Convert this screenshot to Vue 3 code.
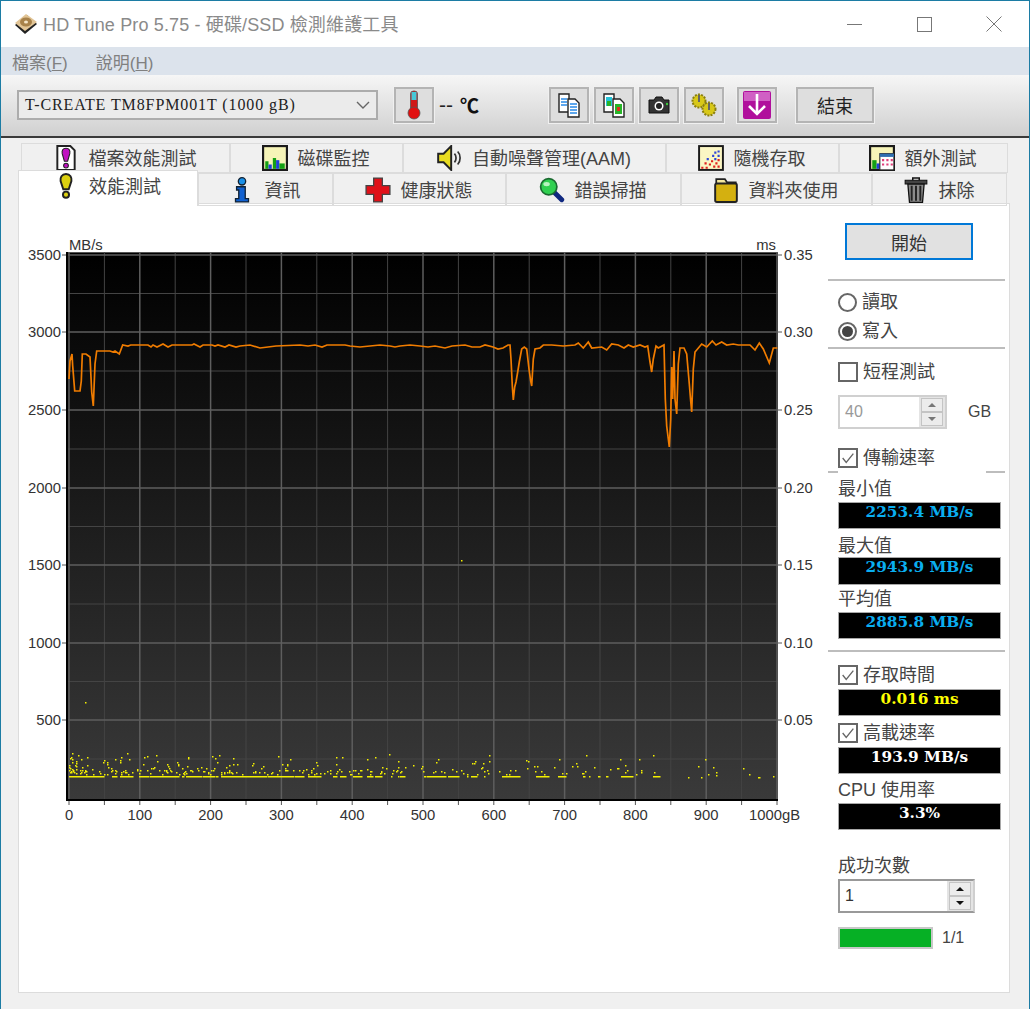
<template>
  <div class="window">
    <div class="titlebar">
      <svg class="app-icon" viewBox="0 0 24 22" width="24" height="22">
        <polygon points="1,12 13,2 23,11 11,21" fill="#222" />
        <polygon points="1,10 12,1 23,9 11,18" fill="#e2c596" />
        <ellipse cx="12" cy="9" rx="6" ry="4.500" fill="#a8824a" />
        <ellipse cx="12" cy="9" rx="2" ry="1.500" fill="#f5e6c8" />
      </svg>
      <span class="app-title">HD Tune Pro 5.75 - 硬碟/SSD 檢測維護工具</span>
      <div class="win-btns">
        <div class="win-btn"><span class="win-min"></span></div>
        <div class="win-btn"><span class="win-max"></span></div>
        <div class="win-btn">
          <svg viewBox="0 0 16 16" width="16" height="16"><path d="M0.500 0.500L15.500 15.500M15.500 0.500L0.500 15.500" stroke="#777" stroke-width="1" fill="none" /></svg>
        </div>
      </div>
    </div>

    <div class="menubar">
      <span class="menu-item">檔案(<u>F</u>)</span>
      <span class="menu-item">說明(<u>H</u>)</span>
    </div>

    <div class="toolbar">
      <div class="combo">
        <span class="combo-text">T-CREATE TM8FPM001T (1000 gB)</span>
        <svg viewBox="0 0 14 8" width="14" height="8"><path d="M1 1L7 7L13 1" stroke="#666" stroke-width="1.400" fill="none" /></svg>
      </div>
      <button type="button" class="tool-btn temp-btn">
        <svg viewBox="0 0 24 30" width="24" height="30">
          <rect x="8.500" y="1" width="7" height="20" rx="3" fill="#d01818" stroke="#555" stroke-width="0.800" />
          <rect x="9.500" y="2" width="5" height="8" fill="#46c8d8" />
          <circle cx="12" cy="23" r="6" fill="#e01010" stroke="#555" stroke-width="0.800" />
        </svg>
      </button>
      <span class="temp-val">--</span>
      <span class="temp-unit">℃</span>

      <button type="button" class="tool-btn first-tool">
        <svg viewBox="0 0 26 26" width="26" height="26">
          <path d="M3 2h10v18H3z" fill="#fff" stroke="#222" stroke-width="1.400" />
          <path d="M5 7h6M5 10h6M5 13h6" stroke="#2a8ae8" stroke-width="1.500" />
          <path d="M12 7h7l4 4v14H12z" fill="#fff" stroke="#222" stroke-width="1.400" />
          <path d="M14 12h7M14 15h7M14 18h7M14 21h7" stroke="#2a8ae8" stroke-width="1.500" />
        </svg>
      </button>
      <button type="button" class="tool-btn">
        <svg viewBox="0 0 26 26" width="26" height="26">
          <path d="M3 2h10v18H3z" fill="#fff" stroke="#222" stroke-width="1.400" />
          <rect x="5" y="5" width="6" height="9" fill="#25c4d8" />
          <rect x="6" y="9" width="4" height="5" fill="#28b428" />
          <path d="M12 7h7l4 4v14H12z" fill="#fff" stroke="#222" stroke-width="1.400" />
          <rect x="14" y="12" width="7" height="10" fill="#28b428" />
          <rect x="16" y="15" width="3" height="4" fill="#e03020" />
        </svg>
      </button>
      <button type="button" class="tool-btn">
        <svg viewBox="0 0 26 22" width="26" height="22">
          <path d="M3 6h5l2-3h6l2 3h5v13H3z" fill="#333" stroke="#111" stroke-width="1" />
          <circle cx="13" cy="12" r="4.500" fill="#fff" />
          <circle cx="13" cy="12" r="3" fill="#222" />
          <circle cx="21" cy="10" r="1.200" fill="#3cc83c" />
        </svg>
      </button>
      <button type="button" class="tool-btn">
        <svg viewBox="0 0 26 26" width="26" height="26">
          <circle cx="8" cy="9" r="6.500" fill="#d8c818" stroke="#8a7e10" stroke-width="2" stroke-dasharray="2 1.200" />
          <circle cx="18" cy="17" r="6.500" fill="#d8c818" stroke="#8a7e10" stroke-width="2" stroke-dasharray="2 1.200" />
          <path d="M8 3v7M18 11v7" stroke="#666" stroke-width="2" />
        </svg>
      </button>
      <button type="button" class="tool-btn save-btn">
        <svg viewBox="0 0 30 30" width="30" height="30">
          <rect x="1" y="1" width="28" height="28" rx="2" fill="#b0109c" />
          <rect x="2" y="2" width="26" height="9" fill="#d060c4" />
          <path d="M15 4v20M7 16l8 8l8-8" stroke="#fff" stroke-width="2.600" fill="none" />
        </svg>
      </button>
      <button type="button" class="tool-btn exit-btn">結束</button>
    </div>

    <div class="tabs-area">
      <div v-for="row in tabRows" :key="row.name" class="tab-row" :class="row.name">
        <div v-for="tab in row.tabs" :key="tab.label" class="tab" :class="{ active: tab.active }">
          <svg class="tab-icon" viewBox="0 0 24 24" width="26" height="26">
            <template v-if="tab.icon === 'fileperf'">
              <path d="M4 1h12l4 4v18H4z" fill="#fff" stroke="#222" stroke-width="1.800" />
              <path d="M12 3c3 0 4 2 3.500 5l-2 7h-3l-2-7C8 5 9 3 12 3z" fill="#c010c0" stroke="#222" />
              <circle cx="12" cy="19" r="2.200" fill="#c010c0" stroke="#222" />
            </template>
            <template v-else-if="tab.icon === 'monitor'">
              <rect x="1" y="1" width="22" height="22" fill="#f6f4b8" stroke="#1a1a1a" stroke-width="2" />
              <path d="M3 15h3v7H3z" fill="#14a014" />
              <path d="M6 18h3v4H6z" fill="#2040d8" />
              <path d="M10 12h3v10h-3z" fill="#14a014" />
              <path d="M13 14h3v8h-3z" fill="#2040d8" />
              <path d="M16 17h5v5h-5z" fill="#14a014" />
            </template>
            <template v-else-if="tab.icon === 'speaker'">
              <path d="M2 8h5l7-7v22l-7-7H2z" fill="#e8dc20" stroke="#222" stroke-width="1.800" />
              <path d="M17 8c2 2 2 6 0 8M20 6c3 3 3 9 0 12" stroke="#333" stroke-width="1.600" fill="none" />
            </template>
            <template v-else-if="tab.icon === 'random'">
              <rect x="1" y="1" width="22" height="22" fill="#fbf6c4" stroke="#1a1a1a" stroke-width="1.800" />
              <path d="M3 20h2v2H3zM6 16h2v2H6zM7 20h2v2H7zM10 17h2v2h-2zM12 14h2v2h-2zM14 19h2v2h-2zM16 16h2v2h-2zM18 19h2v2h-2zM18 13h2v2h-2z" fill="#e02020" />
              <path d="M8 12h2v2H8zM13 9h2v2h-2zM15 12h2v2h-2zM18 5h2v2h-2zM18 9h2v2h-2zM15 6h2v2h-2z" fill="#3048d8" />
            </template>
            <template v-else-if="tab.icon === 'extra'">
              <rect x="1" y="1" width="22" height="22" fill="#f6f4b8" stroke="#1a1a1a" stroke-width="2" />
              <path d="M3 14h4v8H3z" fill="#14a014" />
              <path d="M7 17h3v5H7z" fill="#2040d8" />
              <rect x="10" y="8" width="13" height="15" fill="#fff" stroke="#222" />
              <rect x="10" y="8" width="13" height="3" fill="#2f6fb0" />
              <path d="M12 13h2v2h-2zM16 13h2v2h-2zM20 13h2v2h-2zM12 17h2v2h-2zM16 17h2v2h-2zM20 17h2v2h-2z" fill="#e0407a" />
            </template>
            <template v-else-if="tab.icon === 'bench'">
              <path d="M12 1c4 0 5.500 3 5 6.500L14.500 15h-5L7 7.500C6.500 4 8 1 12 1z" fill="#dcd010" stroke="#222" stroke-width="1.800" />
              <circle cx="12" cy="20" r="2.800" fill="#dcd010" stroke="#222" stroke-width="1.800" />
            </template>
            <template v-else-if="tab.icon === 'info'">
              <circle cx="12" cy="4" r="3.400" fill="#1a90e8" stroke="#123" stroke-width="1.200" />
              <path d="M7 9h8v11h3v3H6v-3h3v-8H7z" fill="#1060d0" stroke="#123" stroke-width="1.200" />
            </template>
            <template v-else-if="tab.icon === 'health'">
              <path d="M8 1h8v7h7v8h-7v7H8v-7H1V8h7z" fill="#e01018" stroke="#444" stroke-width="1.200" />
            </template>
            <template v-else-if="tab.icon === 'scan'">
              <path d="M14 14l7 7" stroke="#102880" stroke-width="4.500" stroke-linecap="round" />
              <circle cx="9" cy="9" r="7.500" fill="#30d050" stroke="#1a6a30" stroke-width="1.600" />
              <ellipse cx="7" cy="6.500" rx="3" ry="2" fill="#b8f4c0" />
            </template>
            <template v-else-if="tab.icon === 'folder'">
              <path d="M3 6V2h8l2 3h8v4H3z" fill="#f4e8a0" stroke="#222" stroke-width="1.600" />
              <rect x="2" y="6" width="20" height="17" rx="1.500" fill="#d4b010" stroke="#222" stroke-width="1.800" />
            </template>
            <template v-else>
              <path d="M2 3h20v3.500H2z" fill="#444" stroke="#111" />
              <path d="M9 3V1h6v2" fill="none" stroke="#111" stroke-width="1.400" />
              <path d="M4.500 6.500h15L18 23.500H6z" fill="#8a8a8a" stroke="#111" stroke-width="1.200" />
              <path d="M8 8v14M12 8v14M16 8v14" stroke="#222" stroke-width="1.800" />
            </template>
          </svg>
          <span>{{ tab.label }}</span>
        </div>
      </div>

      <div class="panel">
        <svg class="chart" viewBox="18 230 810 600" width="810" height="600">
          <defs>
            <linearGradient id="plotBg" x1="0" y1="0" x2="0" y2="1">
              <stop offset="0" stop-color="#000" />
              <stop offset="1" stop-color="#3a3a3a" />
            </linearGradient>
          </defs>
          <rect x="66" y="253" width="712" height="549" fill="url(#plotBg)" />
          <path d="M66 253.500H778" stroke="#555" stroke-width="1" />
          <path v-for="l in minorLines" :key="l" :d="l" stroke="#444" stroke-width="1" />
          <path v-for="l in majorLines" :key="l" :d="l" stroke="#5e5e5e" stroke-width="1.500" />
          <rect x="66" y="253" width="2" height="549" fill="#000" />
          <rect x="66" y="800" width="712" height="2" fill="#000" />
          <path :d="tickPath" stroke="#555" stroke-width="1" />
          <path :d="dotsPath" fill="#f4f000" />
          <polyline :points="speedLine" fill="none" stroke="#f07c00" stroke-width="1.700" />

          <text x="69" y="251" class="axis">MB/s</text>
          <text x="776" y="251" class="axis" text-anchor="end">ms</text>
          <text v-for="t in leftLabels" :key="t.text" x="61" :y="t.y + 5" class="axis" text-anchor="end">{{ t.text }}</text>
          <text v-for="t in rightLabels" :key="t.text" x="784" :y="t.y + 5" class="axis">{{ t.text }}</text>
          <text v-for="t in bottomLabels" :key="t.text" :x="t.x" y="821" class="axis" text-anchor="middle">{{ t.text }}</text>
          <text x="749" y="821" class="axis">1000gB</text>
        </svg>

        <div class="side">
          <button type="button" class="start-btn">開始</button>
          <div class="sep sep-a"></div>
          <div class="opt-row radio-first"><span class="radio"></span>讀取</div>
          <div class="opt-row radio-next"><span class="radio on"></span>寫入</div>
          <div class="sep sep-b"></div>
          <div class="opt-row short-row"><span class="check"></span>短程測試</div>
          <div class="size-row">
            <div class="spin spin-size">
              <span class="spin-val muted">40</span>
              <div class="spin-btns light">
                <span class="spin-up"></span>
                <span class="spin-down"></span>
              </div>
            </div>
            <span class="size-unit">GB</span>
          </div>
          <div class="opt-row rate-row"><span class="check">
            <svg viewBox="0 0 18 18" width="18" height="18"><path d="M3 9l4 5l8-10" stroke="#666" stroke-width="1.500" fill="none" /></svg>
          </span>傳輸速率</div>
          <div class="group-line"><span class="gl-left"></span><span class="gl-right"></span></div>

          <div class="stat-label lbl-min">最小值</div>
          <div class="display blue">2253.4 MB/s</div>
          <div class="stat-label lbl-next">最大值</div>
          <div class="display blue disp-tall">2943.9 MB/s</div>
          <div class="stat-label lbl-avg">平均值</div>
          <div class="display blue">2885.8 MB/s</div>
          <div class="sep sep-c"></div>

          <div class="opt-row access-row"><span class="check">
            <svg viewBox="0 0 18 18" width="18" height="18"><path d="M3 9l4 5l8-10" stroke="#666" stroke-width="1.500" fill="none" /></svg>
          </span>存取時間</div>
          <div class="display yellow">0.016 ms</div>
          <div class="opt-row burst-row"><span class="check">
            <svg viewBox="0 0 18 18" width="18" height="18"><path d="M3 9l4 5l8-10" stroke="#666" stroke-width="1.500" fill="none" /></svg>
          </span>高載速率</div>
          <div class="display white">193.9 MB/s</div>
          <div class="stat-label lbl-cpu">CPU 使用率</div>
          <div class="display white cpu">3.3%</div>

          <div class="stat-label lbl-pass">成功次數</div>
          <div class="spin spin-pass">
            <span class="spin-val">1</span>
            <div class="spin-btns">
              <span class="spin-up dark"></span>
              <span class="spin-down dark"></span>
            </div>
          </div>
          <div class="progress-row">
            <div class="progress"><div class="progress-bar"></div></div>
            <span>1/1</span>
          </div>
        </div>
      </div>
    </div>
  </div>
</template>

<script setup>
const tabRows = [
  {
    name: 'tab-row-top',
    tabs: [
      { label: '檔案效能測試', icon: 'fileperf' },
      { label: '磁碟監控', icon: 'monitor' },
      { label: '自動噪聲管理(AAM)', icon: 'speaker' },
      { label: '隨機存取', icon: 'random' },
      { label: '額外測試', icon: 'extra' },
    ],
  },
  {
    name: 'tab-row-bottom',
    tabs: [
      { label: '效能測試', icon: 'bench', active: true },
      { label: '資訊', icon: 'info' },
      { label: '健康狀態', icon: 'health' },
      { label: '錯誤掃描', icon: 'scan' },
      { label: '資料夾使用', icon: 'folder' },
      { label: '抹除', icon: 'trash' },
    ],
  },
]

const gbX = (gb) => 69 + gb * 0.708
const rateY = [256, 294.500, 333, 372, 411, 450, 489, 527.500, 566, 605, 644, 682.500, 721, 760]

const majorLines = []
const minorLines = []
rateY.forEach((y, i) => {
  ;(i % 2 === 0 ? majorLines : minorLines).push(`M66 ${y}H778`)
})
for (let gb = 0; gb <= 1000; gb += 50) {
  const x = gbX(gb)
  ;(gb % 100 === 0 ? majorLines : minorLines).push(`M${x} 253V800`)
}

let tickPath = ''
rateY.forEach((y, i) => {
  if (i % 2 === 0) tickPath += `M62 ${y}H66M778 ${y}H782`
})
for (let gb = 0; gb <= 1000; gb += 50) tickPath += `M${gbX(gb)} 802V806`

const leftLabels = ['3500', '3000', '2500', '2000', '1500', '1000', '500'].map((text, i) => ({ text, y: rateY[i * 2] }))
const rightLabels = ['0.35', '0.30', '0.25', '0.20', '0.15', '0.10', '0.05'].map((text, i) => ({ text, y: rateY[i * 2] }))
const bottomLabels = [0, 100, 200, 300, 400, 500, 600, 700, 800, 900].map((gb) => ({ text: String(gb), x: gbX(gb) }))

// traced from the run: x, y in window pixels
const speedPoints = [
  69, 380, 70, 362, 72, 355, 72.700, 367, 74.700, 392, 80, 392, 81.300, 382, 82.300, 355, 86, 355, 90, 358,
  91.700, 393, 93.300, 407, 95, 365, 96.700, 352, 110, 352, 113, 353, 115, 352, 119.300, 355, 122.700, 346,
  128, 347, 130.700, 346, 148, 346, 151, 348, 153, 346, 157, 348, 163, 345, 168, 348, 172, 346, 192, 346,
  194, 345, 200, 348, 203, 346, 212, 346, 215, 347, 218, 346, 225, 348, 229, 346, 236, 348, 240, 347,
  250, 346, 260, 349, 268, 348, 276, 347, 300, 346, 308, 347, 315, 346, 322, 348, 327, 346, 345, 346, 350, 347,
  360, 348, 370, 347, 380, 346, 390, 347, 395, 348, 400, 347, 410, 346, 420, 347, 428, 348, 435, 347, 440, 348,
  445, 349, 452, 347, 465, 346, 472, 348, 480, 348, 485, 346, 493, 348, 498, 350, 503, 349, 508, 346, 510, 346, 511, 360,
  512.300, 387, 513.300, 401, 514.700, 388, 516, 383, 517.700, 373, 519.300, 363, 521.700, 350, 524.300, 348,
  526.700, 350, 529, 370, 530.700, 382, 531.700, 387, 533.300, 360, 535, 350, 540, 349, 543.300, 346, 551.700, 346,
  563.300, 347, 575, 346, 578.300, 344, 583.300, 349, 588.300, 343, 591.700, 349, 601.700, 348, 606.700, 351,
  611.700, 345, 618.300, 346, 624, 349, 628.300, 346, 633.300, 348, 640, 346, 645, 348, 647.700, 347, 650, 363,
  651.700, 373, 653.300, 360, 656, 347, 658.300, 349, 664, 346, 665.300, 400, 666.700, 427, 668.300, 440, 669.300, 448,
  670.700, 420, 671.700, 368, 672.700, 400, 674, 352, 675, 400, 676.700, 415, 678.300, 365, 680, 349, 684, 349,
  686.700, 355, 689.300, 385, 690.700, 402, 691.700, 413, 693.300, 370, 695, 353, 701.700, 345, 706.700, 348,
  712.300, 342, 716, 346, 721.700, 343, 726.700, 346, 733.300, 345, 738.300, 346, 750, 346, 755, 351, 759.300, 344,
  763.300, 350, 769.300, 364, 773.300, 349, 777.300, 349,
]
const speedLine = speedPoints.reduce((s, v, i) => s + (i % 2 ? `,${v}` : `${i ? ' ' : ''}${v}`), '')

// seeded so the access time dots come out the same on every run
let seed = 20
const rnd = () => {
  seed = (seed + 0x6d2b79f5) | 0
  let t = Math.imul(seed ^ (seed >>> 15), 1 | seed)
  t = (t + Math.imul(t ^ (t >>> 7), 61 | t)) ^ t
  return ((t ^ (t >>> 14)) >>> 0) / 4294967296
}

let dotsPath = ''
const dot = (x, y) => {
  dotsPath += `M${Math.round(x)} ${Math.round(y)}h1.500v1.500h-1.500z`
}
// the band of dots along the floor comes in short dashes, thinning out with capacity
let inDash = true
for (let x = 69; x < 665; x++) {
  const gb = (x - 69) / 0.708
  const p = gb < 450 ? 0.78 : gb < 700 ? 0.42 : 0.16
  if (rnd() < 0.3) inDash = rnd() < p
  if (inDash) dot(x, 777)
  if (rnd() < p * 0.3) dot(x, 775 - Math.floor(rnd() * 4) * 1.500)
}
for (let i = 0; i < 190; i++) {
  const x = 69 + Math.pow(rnd(), 1.700) * 596
  const r = rnd()
  dot(x, 773 - r * r * 19)
}
;[
  [85, 703], [461, 561], [688, 778], [701, 778], [708, 775], [716, 773], [716, 776], [698, 767], [705, 760], [713, 768],
  [743, 769], [749, 775], [758, 778], [759, 778], [773, 777], [586, 756],
].forEach(([x, y]) => dot(x, y))
</script>

<style scoped>
.window {
  width: 1030px;
  height: 1009px;
  box-sizing: border-box;
  border: 1px solid #1c7ca4;
  border-bottom: none;
  background: #f0f0f0;
  font-family: "Liberation Sans", "Noto Sans CJK TC", sans-serif;
  color: #3a3a3a;
  overflow: hidden;
}

.titlebar {
  height: 46px;
  display: flex;
  align-items: center;
  background: #fff;
}

.app-icon {
  margin-left: 13px;
  margin-right: 5px;
}

.app-title {
  margin-bottom: 3px;
  font-size: 18px;
  letter-spacing: 0.14px;
  color: #8a8a8a;
}

.win-btns {
  display: flex;
  margin-left: auto;
}

.win-btn {
  width: 70px;
  height: 46px;
  display: flex;
  align-items: center;
  justify-content: center;
}

.win-min {
  width: 15px;
  height: 1px;
  background: #777;
}

.win-max {
  width: 13px;
  height: 13px;
  border: 1px solid #777;
}

.menubar {
  height: 28px;
  display: flex;
  align-items: center;
  gap: 28px;
  padding-left: 11px;
  background: #dce3ec;
}

.menu-item {
  font-size: 17px;
  color: #808080;
}

.toolbar {
  height: 59px;
  display: flex;
  align-items: center;
  padding: 0 0 2px 16px;
  background: linear-gradient(#f6f6f6, #d0d0d0);
  border-bottom: 2px solid #3a3a3a;
}

.combo {
  width: 361px;
  height: 30px;
  box-sizing: border-box;
  border: 2px solid #acacac;
  background: #ebebeb;
  display: flex;
  align-items: center;
  justify-content: space-between;
  padding: 0 6px;
}

.combo-text {
  font-family: "Liberation Serif", "Noto Sans CJK TC", serif;
  font-size: 16px;
  letter-spacing: 0.9px;
  color: #222;
}

.tool-btn {
  width: 40px;
  height: 36px;
  box-sizing: border-box;
  margin: 0 0 0 5px;
  padding: 0;
  border: 2px solid #b4b4b4;
  background: #dedede;
  box-shadow: 0 0 0 1px #f0f0f0;
  display: flex;
  align-items: center;
  justify-content: center;
}

.temp-btn {
  margin-left: 16px;
}

.temp-val {
  margin-left: 5px;
  font-size: 21px;
  color: #222;
}

.temp-unit {
  margin-left: 7px;
  font-size: 19px;
  font-weight: 700;
  color: #111;
}

.first-tool {
  margin-left: 70px;
}

.save-btn {
  margin-left: 13px;
}

.exit-btn {
  width: 78px;
  margin-left: 19px;
  font-family: inherit;
  font-size: 18px;
  color: #222;
}

.tabs-area {
  padding: 5px 0 0 17px;
}

.tab-row {
  display: grid;
  height: 30px;
}

.tab-row-top {
  margin-left: 3px;
  grid-template-columns: 209px 173px 263px 173px 169px;
}

.tab-row-bottom {
  grid-template-columns: 180px 135px 173px 175px 191px 135px;
}

.tab {
  display: flex;
  align-items: center;
  justify-content: center;
  gap: 10px;
  padding-right: 2px;
  box-sizing: border-box;
  border: 1px solid #dcdcdc;
  font-size: 18px;
  color: #444;
  white-space: nowrap;
}

.tab span {
  margin-bottom: 2px;
}

.tab.active {
  position: relative;
  z-index: 2;
  height: 36px;
  margin-top: -3px;
  padding-bottom: 6px;
  background: #fff;
  border-bottom: none;
}

.panel {
  width: 992px;
  height: 790px;
  box-sizing: border-box;
  border: 1px solid #dcdcdc;
  background: #fff;
  display: flex;
}

.chart {
  flex: none;
  margin-top: 25px;
  margin-left: -1px;
}

.axis {
  font-family: "Liberation Sans", sans-serif;
  font-size: 14.800px;
  fill: #333;
}

.side {
  width: 177px;
  display: flex;
  flex-direction: column;
  align-items: flex-start;
  font-size: 18px;
  color: #444;
}

.start-btn {
  width: 128px;
  height: 37px;
  margin: 19px 0 0 17px;
  box-sizing: border-box;
  border: 2px solid #0078d7;
  background: #e1e1e1;
  font-family: inherit;
  font-size: 18px;
  color: #333;
}

.sep {
  width: 177px;
  height: 2px;
  background: #bdbdbd;
  flex: none;
}

.sep-a {
  margin-top: 19px;
}

.sep-b {
  margin-top: 4px;
}

.sep-c {
  margin-top: 11px;
}

.opt-row {
  display: flex;
  align-items: center;
  gap: 5px;
  height: 24px;
  padding-left: 10px;
  line-height: 24px;
}

.radio-first {
  margin-top: 9px;
}

.radio-next {
  margin-top: 5px;
}

.short-row {
  margin-top: 11px;
}

.rate-row {
  margin-top: 17px;
}

.access-row {
  margin-top: 11px;
}

.burst-row {
  margin-top: 5px;
}

.radio {
  width: 19px;
  height: 19px;
  box-sizing: border-box;
  border: 2px solid #666;
  border-radius: 50%;
  background: #fff;
  display: flex;
  align-items: center;
  justify-content: center;
}

.radio.on::after {
  content: "";
  width: 11px;
  height: 11px;
  border-radius: 50%;
  background: #444;
}

.check {
  width: 20px;
  height: 20px;
  box-sizing: border-box;
  border: 2px solid #666;
  background: #fff;
  display: flex;
  align-items: center;
  justify-content: center;
}

.size-row {
  display: flex;
  align-items: center;
  margin: 11px 0 0 10px;
}

.size-unit {
  margin-left: 21px;
  font-size: 16px;
}

.spin {
  box-sizing: border-box;
  height: 34px;
  display: flex;
  justify-content: space-between;
  background: #fff;
  border: 2px solid #d0d0d0;
}

.spin-size {
  width: 109px;
}

.spin-pass {
  width: 137px;
  margin: 2px 0 0 10px;
  border-color: #999 #cfcfcf #999 #999;
}

.spin-val {
  padding-left: 5px;
  font-size: 16px;
  line-height: 30px;
  color: #333;
}

.spin-val.muted {
  color: #999;
}

.spin-btns {
  width: 26px;
  display: flex;
  flex-direction: column;
  justify-content: space-between;
  background: #e4e4e4;
  padding: 1px 2px;
  box-sizing: border-box;
}

.spin-up,
.spin-down {
  height: 13px;
  background: #ececec;
  border: 1px solid #c4c4c4;
  display: flex;
  align-items: center;
  justify-content: center;
}

.spin-up::after,
.spin-down::after {
  content: "";
  width: 0;
  height: 0;
  border-left: 4px solid transparent;
  border-right: 4px solid transparent;
}

.spin-up::after {
  border-bottom: 4px solid #777;
}

.spin-down::after {
  border-top: 4px solid #777;
}

.spin-up.dark::after {
  border-bottom-color: #111;
}

.spin-down.dark::after {
  border-top-color: #111;
}

.group-line {
  width: 177px;
  height: 2px;
  margin-top: 1px;
  display: flex;
  justify-content: space-between;
}

.gl-left {
  width: 10px;
  background: #bdbdbd;
}

.gl-right {
  width: 19px;
  background: #bdbdbd;
}

.stat-label {
  height: 22px;
  line-height: 22px;
  padding-left: 10px;
}

.lbl-min {
  margin-top: 5px;
}

.lbl-next {
  margin-top: 6px;
}

.lbl-avg {
  margin-top: 3px;
}

.lbl-cpu {
  margin-top: 5px;
}

.lbl-pass {
  margin-top: 25px;
}

.display {
  width: 163px;
  height: 27px;
  flex: none;
  box-sizing: border-box;
  margin: 2px 0 0 10px;
  border: 1px solid #a8a8a8;
  background: #000;
  font-family: "DejaVu Serif", serif;
  font-size: 15.300px;
  font-weight: 700;
  line-height: 19px;
  text-align: center;
}

.disp-tall {
  margin-top: 0;
  height: 28px;
}

.blue {
  color: #0aaef0;
}

.yellow {
  color: #ffff00;
}

.white {
  color: #fff;
}

.progress-row {
  display: flex;
  align-items: center;
  gap: 9px;
  margin: 14px 0 0 10px;
  font-size: 16px;
}

.progress {
  width: 95px;
  height: 22px;
  box-sizing: border-box;
  border: 2px solid #c8c8c8;
}

.progress-bar {
  height: 100%;
  background: #06b025;
}
</style>

<style>
html,
body {
  margin: 0;
  background: #f0f0f0;
}
</style>
